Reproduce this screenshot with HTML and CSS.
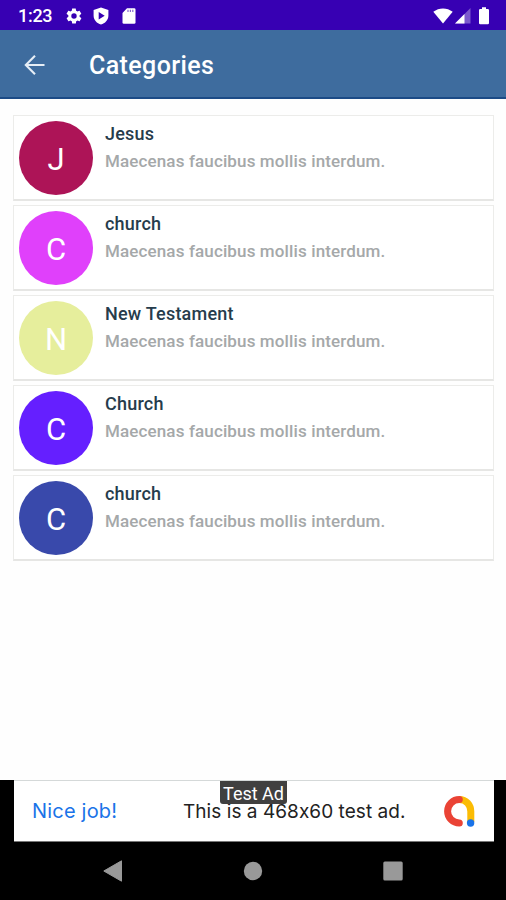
FILE: index.html
```html
<!DOCTYPE html>
<html lang="en">
<head>
    <meta charset="UTF-8">
    <meta name="viewport" content="width=device-width, initial-scale=1.0">
    <title>Categories</title>
    <link rel="stylesheet" href="styles.css">
</head>
<body>
    <div class="status-bar">
      <span class="time">1:23</span>
      <svg class="icon-gear" width="18" height="18" viewBox="0 0 24 24"><path fill="#fff" d="M19.4 13c0-.3.1-.6.1-1s0-.7-.1-1l2.1-1.600c.2-.2.2-.4.1-.6l-2-3.500c-.1-.2-.4-.3-.6-.2l-2.500 1c-.5-.4-1.100-.7-1.700-1l-.4-2.600c0-.2-.2-.4-.5-.4h-4c-.2 0-.5.2-.5.4l-.4 2.600c-.6.300-1.200.6-1.700 1l-2.500-1c-.2-.1-.5 0-.6.200l-2 3.500c-.1.200-.1.500.1.600L4.500 11c0 .3-.1.700-.1 1s0 .7.1 1l-2.100 1.600c-.2.200-.2.400-.1.600l2 3.500c.1.200.4.300.6.200l2.500-1c.5.400 1.100.7 1.700 1l.4 2.600c0 .2.200.4.500.4h4c.3 0 .5-.2.500-.4l.4-2.600c.6-.3 1.200-.6 1.700-1l2.500 1c.2.1.5 0 .6-.2l2-3.500c.1-.2.1-.5-.1-.6zM12 15.600a3.600 3.600 0 1 1 0-7.200 3.600 3.600 0 0 1 0 7.200z"/></svg>
      <svg class="icon-shield" width="16" height="18" viewBox="0 0 16 18"><path fill="#fff" fill-rule="evenodd" d="M8 .4 L15.400 3 V8.500 C15.400 13 12 16.500 8 17.600 C4 16.500 .6 13 .6 8.500 V3 Z M5.700 5 V12.400 L11.700 8.700 Z"/></svg>
      <svg class="icon-card" width="14" height="16" viewBox="0 0 14 16"><path fill="#fff" d="M5 .3 H12.200 Q13.500 .3 13.500 1.600 V14.400 Q13.500 15.700 12.200 15.700 H1.800 Q.5 15.700 .5 14.400 V5 Z"/><path stroke="#3700b3" stroke-width="1.200" stroke-opacity=".6" d="M6 1.800V4M8.400 1.800V4M10.800 1.800V4"/></svg>
      <div class="status-right">
        <svg width="20" height="16" viewBox="0 0 20 16"><path fill="#fff" d="M10 15.600 L.3 3.800 C6 -.7 14 -.7 19.700 3.800 Z"/></svg>
        <svg class="icon-signal" width="16" height="16" viewBox="0 0 16 16"><path fill="#fff" fill-opacity=".35" d="M15.500 0 V15.600 H0 Z"/><path fill="#fff" d="M9.500 6 V15.600 H0 Z"/></svg>
        <svg class="icon-battery" width="12" height="18" viewBox="0 0 12 18"><path fill="#fff" d="M4 .3 H8 V2 H9.800 Q11 2 11 3.200 V16 Q11 17.200 9.800 17.200 H2.200 Q1 17.200 1 16 V3.200 Q1 2 2.200 2 H4 Z"/></svg>
      </div>
    </div>

    <div class="app-bar">
      <svg class="back" width="22" height="22" viewBox="0 0 22 22"><path fill="none" stroke="#e6eef6" stroke-width="2.100" d="M20.500 11H2.200M11 1.800L1.800 11L11 20.200"/></svg>
      <h1>Categories</h1>
    </div>

    <div class="list">
      <div class="card">
        <div class="avatar jesus">J</div>
        <div class="info"><h2>Jesus</h2><p>Maecenas faucibus mollis interdum.</p></div>
      </div>
      <div class="card">
        <div class="avatar pink">C</div>
        <div class="info"><h2>church</h2><p>Maecenas faucibus mollis interdum.</p></div>
      </div>
      <div class="card">
        <div class="avatar lime">N</div>
        <div class="info"><h2>New Testament</h2><p>Maecenas faucibus mollis interdum.</p></div>
      </div>
      <div class="card">
        <div class="avatar violet">C</div>
        <div class="info"><h2>Church</h2><p>Maecenas faucibus mollis interdum.</p></div>
      </div>
      <div class="card">
        <div class="avatar indigo">C</div>
        <div class="info"><h2>church</h2><p>Maecenas faucibus mollis interdum.</p></div>
      </div>
    </div>

    <div class="ad-row">
      <div class="ad">
        <span class="nice">Nice job!</span>
        <span class="ad-text">This is a 468x60 test ad.</span>
        <svg class="ad-logo" width="32" height="32" viewBox="0 0 32 32">
          <path fill="none" stroke="#fbbc04" stroke-width="7" d="M16 4.500 C23.500 4.500 27.800 10 27.800 16.500 V27"/>
          <path fill="none" stroke="#ea4335" stroke-width="7" stroke-linecap="round" d="M16.300 4.500 A11.700 11.700 0 0 0 16.300 27.900"/>
          <circle cx="27.600" cy="28" r="3.700" fill="#1a73e8"/>
        </svg>
        <span class="ad-label">Test Ad</span>
      </div>
    </div>

    <div class="nav-bar">
      <svg width="20" height="22" viewBox="0 0 20 22"><path fill="#999" d="M18.500 .8 V21.200 L.8 11 Z" stroke="#999" stroke-linejoin="round"/></svg>
      <svg width="20" height="20" viewBox="0 0 20 20"><circle cx="10" cy="10" r="9.200" fill="#999"/></svg>
      <svg width="20" height="20" viewBox="0 0 20 20"><rect x=".3" y=".5" width="19.400" height="19" rx="1.500" fill="#999"/></svg>
    </div>
</body>
</html>
```
FILE: styles.css
```css
* {
  margin: 0;
  padding: 0;
  box-sizing: border-box;
}

body {
  width: 506px;
  height: 900px;
  display: flex;
  flex-direction: column;
  overflow: hidden;
  background-color: #fefefe;
  font-family: Roboto, sans-serif;
}

svg {
  display: block;
  flex-shrink: 0;
}

.status-bar {
  display: flex;
  align-items: center;
  height: 30px;
  padding: 1px 16px 0 18px;
  background-color: #3700b3;
  color: #fff;
}

.time {
  width: 47px;
  font-size: 18px;
  font-weight: 500;
  letter-spacing: -0.3px;
}

.icon-shield {
  margin-left: 10px;
}

.icon-card {
  margin-left: 13px;
}

.status-right {
  display: flex;
  align-items: center;
  margin-left: auto;
}

.icon-signal {
  margin-left: 2px;
}

.icon-battery {
  margin-left: 7px;
}

.app-bar {
  display: flex;
  align-items: center;
  height: 69px;
  padding: 2px 0 0 24px;
  background-color: #3e6c9e;
  border-bottom: 2px solid #1c4b86;
}

.app-bar h1 {
  margin: 2px 0 0 43px;
  color: #fff;
  font-size: 25px;
  font-weight: 500;
  letter-spacing: 0.4px;
}

.list {
  flex: 1;
  display: flex;
  flex-direction: column;
  gap: 4px;
  padding: 16px 12px 0 13px;
}

.card {
  display: flex;
  height: 86px;
  padding: 5px;
  background-color: #fff;
  border: 1px solid #ececea;
  border-bottom: 2px solid #e6e6e4;
}

.avatar {
  width: 74px;
  height: 74px;
  border-radius: 50%;
  color: #fff;
  font-size: 31px;
  line-height: 78px;
  text-align: center;
}

.jesus { background-color: #ad1457; }
.pink { background-color: #e040fb; }
.lime { background-color: #e6ee9c; }
.violet { background-color: #651fff; }
.indigo { background-color: #3949ab; }

.info {
  padding: 2px 0 0 12px;
}

.info h2 {
  color: #263c4c;
  font-size: 18px;
  font-weight: 500;
  line-height: 22px;
  letter-spacing: 0.22px;
}

.info p {
  margin-top: 5px;
  color: #a5a8a9;
  font-size: 17px;
  font-weight: 500;
  line-height: 22px;
  letter-spacing: 0.13px;
}

.ad-row {
  height: 62px;
  padding: 0 12px 0 14px;
  background-color: #000;
}

.ad {
  position: relative;
  display: flex;
  align-items: center;
  height: 62px;
  padding: 0 19px 0 18px;
  background-color: #fff;
  border-top: 1px solid #d5d9d9;
  border-bottom: 1px solid #777;
  font-family: Inter, sans-serif;
  font-size: 19px;
  font-feature-settings: "calt" 0;
  white-space: nowrap;
}

.nice {
  width: 151px;
  color: #1a73e8;
  font-size: 20px;
  letter-spacing: 0.2px;
}

.ad-text {
  color: #222;
  letter-spacing: 0.05px;
}

.ad-logo {
  margin-left: auto;
}

.ad-label {
  position: absolute;
  top: 0;
  left: 206px;
  width: 67px;
  height: 23px;
  border-radius: 0 0 3px 3px;
  background-color: #404040;
  color: #fff;
  font-family: Roboto, sans-serif;
  font-size: 18px;
  line-height: 25px;
  text-align: center;
}

.nav-bar {
  display: flex;
  align-items: center;
  justify-content: space-between;
  height: 58px;
  padding: 0 103px;
  background-color: #000;
}
```
